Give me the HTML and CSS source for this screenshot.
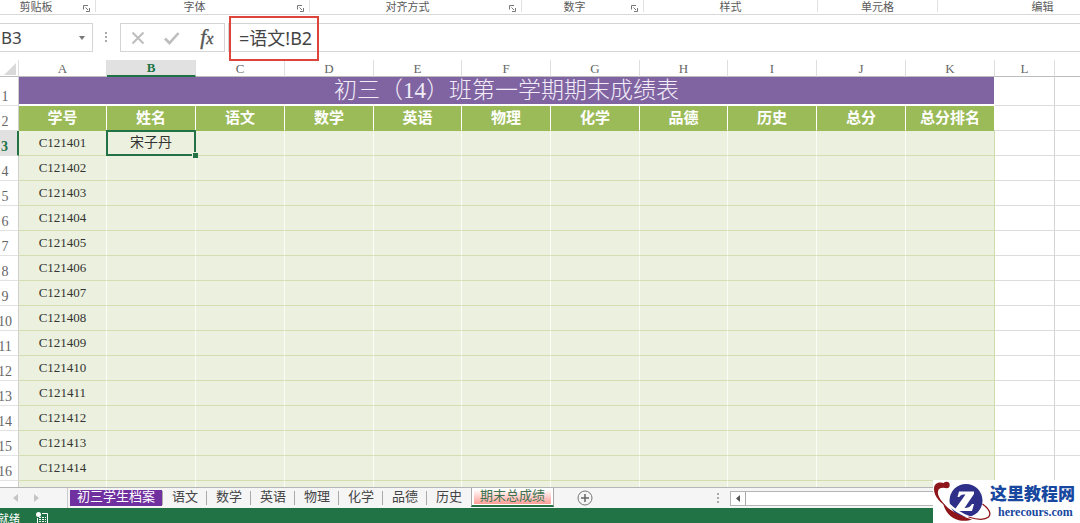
FILE: index.html
```html
<!DOCTYPE html>
<html lang="zh-CN">
<head>
<meta charset="utf-8">
<title>初三（14）班第一学期期末成绩表</title>
<link rel="stylesheet" href="styles.css">
</head>
<body>
<svg class="defs" width="0" height="0" aria-hidden="true">
  <symbol id="launcher" viewBox="0 0 7 7"><path d="M.5 4.500V.5H5M2.500 2.500L5 5M6.500 3v3.500H3" fill="none" stroke="#777"/></symbol>
</svg>
<div class="app">
  <header class="ribbon">
    <div class="group clipboard"><span>剪贴板</span><button aria-label="剪贴板设置"><svg><use href="#launcher"/></svg></button></div>
    <div class="group font"><span>字体</span><button aria-label="字体设置"><svg><use href="#launcher"/></svg></button></div>
    <div class="group align"><span>对齐方式</span><button aria-label="对齐设置"><svg><use href="#launcher"/></svg></button></div>
    <div class="group number"><span>数字</span><button aria-label="数字格式"><svg><use href="#launcher"/></svg></button></div>
    <div class="group style"><span>样式</span></div>
    <div class="group cells"><span>单元格</span></div>
    <div class="group edit"><span>编辑</span></div>
  </header>

  <div class="formula-bar">
    <div class="name-box">
      <input type="text" value="B3" aria-label="名称框">
      <button aria-label="展开名称框"><svg width="6" height="4" viewBox="0 0 6 4"><path d="M0 0h6L3 4z" fill="#777"/></svg></button>
    </div>
    <svg class="grip" width="2" height="11" viewBox="0 0 2 11"><path d="M1 0v11" stroke="#aaa" stroke-width="2" stroke-dasharray="2 2"/></svg>
    <div class="actions">
      <button aria-label="取消"><svg width="14" height="14" viewBox="0 0 14 14"><path d="M1.500 1.500l11 11M12.500 1.500l-11 11" fill="none" stroke="#bdbdbd" stroke-width="2"/></svg></button>
      <button aria-label="输入"><svg width="16" height="14" viewBox="0 0 16 14"><path d="M1 7.500l4.500 4.500L14.500 2" fill="none" stroke="#bdbdbd" stroke-width="2.600"/></svg></button>
      <button class="fx" aria-label="插入函数"><i>f</i><i class="x">x</i></button>
    </div>
    <div class="formula">
      <input type="text" value="=语文!B2" aria-label="编辑栏">
      <div class="highlight"></div>
    </div>
  </div>

  <main class="sheet">
    <table>
      <colgroup><col class="c-head"><col class="c88"><col class="c89"><col class="c89"><col class="c89"><col class="c88"><col class="c89"><col class="c89"><col class="c88"><col class="c89"><col class="c89"><col class="c89"><col class="c60"><col></colgroup>
      <thead>
        <tr class="letters"><th><svg width="12" height="12" viewBox="0 0 12 12"><path d="M12 0v12H0z" fill="#d9d9d9"/></svg></th><th>A</th><th class="current">B</th><th>C</th><th>D</th><th>E</th><th>F</th><th>G</th><th>H</th><th>I</th><th>J</th><th>K</th><th>L</th><th></th></tr>
      </thead>
      <tbody>
        <tr class="title"><th>1</th><td colspan="11">初三（14）班第一学期期末成绩表</td><td></td><td></td></tr>
        <tr class="fields"><th>2</th><td>学号</td><td>姓名</td><td>语文</td><td>数学</td><td>英语</td><td>物理</td><td>化学</td><td>品德</td><td>历史</td><td>总分</td><td>总分排名</td><td></td><td></td></tr>
        <tr><th class="current">3</th><td>C121401</td><td class="selected">宋子丹</td><td></td><td></td><td></td><td></td><td></td><td></td><td></td><td></td><td></td><td></td><td></td></tr>
        <tr><th>4</th><td>C121402</td><td></td><td></td><td></td><td></td><td></td><td></td><td></td><td></td><td></td><td></td><td></td><td></td></tr>
        <tr><th>5</th><td>C121403</td><td></td><td></td><td></td><td></td><td></td><td></td><td></td><td></td><td></td><td></td><td></td><td></td></tr>
        <tr><th>6</th><td>C121404</td><td></td><td></td><td></td><td></td><td></td><td></td><td></td><td></td><td></td><td></td><td></td><td></td></tr>
        <tr><th>7</th><td>C121405</td><td></td><td></td><td></td><td></td><td></td><td></td><td></td><td></td><td></td><td></td><td></td><td></td></tr>
        <tr><th>8</th><td>C121406</td><td></td><td></td><td></td><td></td><td></td><td></td><td></td><td></td><td></td><td></td><td></td><td></td></tr>
        <tr><th>9</th><td>C121407</td><td></td><td></td><td></td><td></td><td></td><td></td><td></td><td></td><td></td><td></td><td></td><td></td></tr>
        <tr><th>10</th><td>C121408</td><td></td><td></td><td></td><td></td><td></td><td></td><td></td><td></td><td></td><td></td><td></td><td></td></tr>
        <tr><th>11</th><td>C121409</td><td></td><td></td><td></td><td></td><td></td><td></td><td></td><td></td><td></td><td></td><td></td><td></td></tr>
        <tr><th>12</th><td>C121410</td><td></td><td></td><td></td><td></td><td></td><td></td><td></td><td></td><td></td><td></td><td></td><td></td></tr>
        <tr><th>13</th><td>C121411</td><td></td><td></td><td></td><td></td><td></td><td></td><td></td><td></td><td></td><td></td><td></td><td></td></tr>
        <tr><th>14</th><td>C121412</td><td></td><td></td><td></td><td></td><td></td><td></td><td></td><td></td><td></td><td></td><td></td><td></td></tr>
        <tr><th>15</th><td>C121413</td><td></td><td></td><td></td><td></td><td></td><td></td><td></td><td></td><td></td><td></td><td></td><td></td></tr>
        <tr><th>16</th><td>C121414</td><td></td><td></td><td></td><td></td><td></td><td></td><td></td><td></td><td></td><td></td><td></td><td></td></tr>
        <tr><th></th><td></td><td></td><td></td><td></td><td></td><td></td><td></td><td></td><td></td><td></td><td></td><td></td><td></td></tr>
      </tbody>
    </table>
  </main>

  <nav class="tab-bar">
    <div class="arrows">
      <button aria-label="上一个工作表"><svg width="5" height="8" viewBox="0 0 5 8"><path d="M5 0v8L0 4z" fill="#c4c4c4"/></svg></button>
      <button aria-label="下一个工作表"><svg width="5" height="8" viewBox="0 0 5 8"><path d="M0 0v8l5-4z" fill="#c4c4c4"/></svg></button>
    </div>
    <button class="tab archive"><span>初三学生档案</span></button>
    <button class="tab">语文</button>
    <button class="tab">数学</button>
    <button class="tab">英语</button>
    <button class="tab">物理</button>
    <button class="tab">化学</button>
    <button class="tab">品德</button>
    <button class="tab last">历史</button>
    <button class="tab active"><span>期末总成绩</span></button>
    <button class="add" aria-label="新工作表"><svg width="16" height="16" viewBox="0 0 16 16"><circle cx="8" cy="8" r="7" fill="none" stroke="#777"/><path d="M8 4v8M4 8h8" stroke="#666" stroke-width="1.500"/></svg></button>
    <svg class="grip" width="2" height="10" viewBox="0 0 2 10"><path d="M1 0v10" stroke="#aaa" stroke-width="2" stroke-dasharray="2 2"/></svg>
    <div class="scroll">
      <button aria-label="向左滚动"><svg width="4" height="7" viewBox="0 0 4 7"><path d="M4 0v7L0 3.500z" fill="#555"/></svg></button>
      <div class="thumb"></div>
    </div>
  </nav>

  <footer class="status">
    <span>就绪</span>
    <svg width="12" height="11" viewBox="0 0 12 11"><circle cx="2.500" cy="2.500" r="2.500" fill="#fff"/><path d="M6 1.500h5.500V11M1.500 6v5" fill="none" stroke="#fff"/><path d="M3 5.500h7M3 7.500h7M3 9.500h7" stroke="#fff" stroke-dasharray="2 1"/></svg>
  </footer>

  <a class="brand" href="#">
    <svg width="60" height="43" viewBox="0 0 60 43">
      <circle cx="33" cy="20.500" r="16.500" fill="#2d2f88"/>
      <path d="M11 18c4 7 12 13 20 17s18 4 24 3" fill="none" stroke="#fff" stroke-width="2.500"/>
      <path d="M24.500 17l1.500-5.500h15V14L31.500 28c3.500 0 5.500-1 7.500-4h2l-2 7H22.500v-2.500L32.500 14.500c-3.500 0-5 .5-6.300 2.500z" fill="#fff"/>
      <path d="M12 3.500C5 1 1 4 1 9c0 8 7 14 14 19-6-6-11-12-10-17 .5-3 4-4 8-3z" fill="#8e1519"/>
      <circle cx="13.500" cy="5" r="3.200" fill="#8e1519"/>
      <path d="M10 23c6 7 15 12 29 16.500-9 3.500-25 1-29-16.500z" fill="#8e1519"/>
      <path d="M49.500 24c7 5 9 10 6 13-4 3.500-12 2.500-20 0" fill="none" stroke="#8e1519" stroke-width="1.300"/>
    </svg>
    <span class="brand-text"><b class="brand-name">这里教程网</b><b class="brand-url">herecours.com</b></span>
  </a>
</div>
</body>
</html>
```
FILE: styles.css
```css
* { box-sizing: border-box; }
body { margin: 0; background: #fff; }
button, input { font: inherit; color: inherit; border: 0; padding: 0; margin: 0; background: none; outline: 0; }
svg { display: block; flex: none; }
.defs { position: absolute; }

.app {
  position: relative;
  display: flex;
  flex-direction: column;
  height: 100vh;
  overflow: hidden;
  font-family: "Noto Sans", "Noto Sans CJK SC", sans-serif;
  color: #444;
}

/* ribbon captions */
.ribbon {
  display: flex;
  flex: none;
  height: 15px;
  border-bottom: 1px solid #d9d9d9;
  font: 11px/12px "Noto Sans CJK SC", sans-serif;
  color: #5a5a5a;
}
.group { display: flex; flex: none; height: 12px; border-right: 1px solid #e1e1e1; }
.group span { flex: 1; text-align: center; }
.group button { width: 16px; padding: 4px 5px 0 4px; }
.group button svg { width: 7px; height: 7px; }
.clipboard { width: 103px; margin-left: -7px; }
.font { width: 214px; }
.align { width: 212px; }
.number { width: 122px; }
.style { width: 174px; }
.cells { width: 120px; }
.edit { width: 210px; }

/* formula bar */
.formula-bar { display: flex; flex: none; align-items: center; height: 45px; padding-top: 8px; padding-bottom: 8px; }
.name-box { display: flex; width: 93px; height: 29px; border: 1px solid #d4d4d4; border-left: 0; font-size: 17px; }
.name-box input { flex: 1; min-width: 0; height: 26px; padding-left: 1px; }
.name-box button { width: 18px; padding-left: 5px; }
.formula-bar .grip { margin: 0 13px 0 12px; }
.actions { display: flex; width: 105px; height: 29px; border: 1px solid #d4d4d4; }
.actions button { display: flex; flex: 1; align-items: center; justify-content: center; }
.actions .fx { align-items: baseline; font: italic 21px/26px "Liberation Serif", serif; color: #555; -webkit-text-stroke: 0.4px #555; }
.fx .x { font-size: 16px; }
.formula { position: relative; flex: 1; height: 29px; margin-left: 3px; border: 1px solid #d4d4d4; border-right: 0; font-size: 18px; }
.formula input { display: block; width: 100%; height: 25px; padding-left: 10px; }
.highlight { position: absolute; left: 0; top: -8px; width: 90px; height: 45px; border: 2px solid #dc443c; }

/* worksheet grid */
.sheet { flex: 1; min-height: 0; margin-left: -8px; overflow: hidden; }
table { width: 100%; table-layout: fixed; border-collapse: separate; border-spacing: 0; font: 13px/16px "Liberation Serif", "Noto Sans CJK SC", serif; color: #333; }
.c-head { width: 27px; }
.c88 { width: 88px; }
.c89 { width: 89px; }
.c60 { width: 60px; }
td, th { height: 25px; padding: 0; text-align: center; white-space: nowrap; }
td { background: #ebf1de; border-right: 1px solid #fafcf6; border-bottom: 1px solid #d3deb0; }
td:nth-last-child(3) { border-right-color: #d0dcae; }
td:nth-last-child(-n+2) { background: #fff; border-right-color: #d4d4d4; border-bottom-color: #dcdcdc; }
td:last-child { border-right: 0; }
th { font-weight: normal; color: #666; }
tbody th { vertical-align: bottom; font-size: 14px; border-right: 1px solid #cfcfcf; border-bottom: 1px solid #e2e2e2; }
.letters th { height: 17px; line-height: 15px; padding-top: 1px; border-right: 1px solid #dedede; border-bottom: 1px solid #bdbdbd; }
.letters th:last-child { border-right: 0; }
.letters th:first-child svg { margin-left: 12px; }
.letters .current { padding-top: 0; background: #e1e1e1; color: #217346; font-weight: bold; border-bottom: 2px solid #217346; }
tbody th.current { background: #e1e1e1; color: #217346; font-weight: bold; border-right: 2px solid #217346; }
.title td, .title th { height: 29px; }
.title td:nth-child(2) { background: #8064a2; color: #f1ecf7; border-color: #fff; border-bottom-width: 2px; font: 300 23px/26px "Liberation Serif", "Noto Sans CJK SC", serif; }
.fields td:nth-child(-n+12) { background: #9bbb59; color: #fff; border-color: #fff; border-bottom-color: #9bbb59; font-size: 15px; font-weight: bold; }
td.selected { position: relative; font-size: 14px; }
td.selected::before { content: ""; position: absolute; inset: -1px; border: 2px solid #217346; }
td.selected::after { content: ""; position: absolute; right: -3px; bottom: -3px; width: 5px; height: 5px; background: #217346; border: solid #ebf1de; border-width: 1px 0 0 1px; }

/* sheet tabs */
.tab-bar { display: flex; flex: none; height: 21px; background: #f5f5f5; border-top: 1px solid #b5b5b5; font: 13px/15px "Noto Sans CJK SC", sans-serif; }
.arrows { display: flex; align-items: center; gap: 16px; width: 68px; padding-left: 13px; border-right: 1px solid #ccc; }
.tab { position: relative; flex: none; width: 44px; height: 18px; padding-bottom: 4px; }
.tab::after { content: ""; position: absolute; right: 0; top: 3px; height: 14px; border-right: 1px solid #aaa; }
.tab.archive { width: 95px; padding: 2px 1px 0 2px; }
.archive span { display: block; height: 16px; line-height: 11px; background: #7030a0; color: #fff; }
.tab.last::after, .tab.active::after { display: none; }
.tab.active { width: 83px; height: 19px; padding: 0 2px 1px; background: #fff; border: solid #aaa; border-width: 0 1px; border-bottom: 2px solid #217346; color: #3e7350; }
.active span { display: block; height: 16px; line-height: 14px; background: linear-gradient(#fff 10%, #ff9c95); }
.add { width: 16px; margin-left: 23px; }
.tab-bar .grip { align-self: center; margin-left: auto; }
.scroll { display: flex; width: 350px; height: 15px; margin: 3px 0 0 11px; border: 1px solid #b5b5b5; border-right: 0; background: #fff; }
.scroll button { width: 15px; padding-left: 5px; border-right: 1px solid #aaa; }
.thumb { flex: 1; background: #fff; }

.status { display: flex; flex: none; gap: 16px; height: 15px; padding-top: 4px; overflow: hidden; background: #217346; color: #fff; font: 11px/12px "Noto Sans CJK SC", sans-serif; }
.status span { margin-left: -2px; }

/* site mark over the lower right corner */
.brand { position: absolute; right: 0; bottom: 0; display: flex; width: 147px; height: 43px; background: #fff; text-decoration: none; }
.brand-text { display: flex; flex-direction: column; width: 82px; margin-left: -3px; color: #17479e; }
.brand-name { font: 900 17px/26px "Noto Sans CJK SC", sans-serif; white-space: nowrap; }
.brand-url { padding-left: 8px; font: bold 12px/12px "Liberation Serif", serif; }
```
